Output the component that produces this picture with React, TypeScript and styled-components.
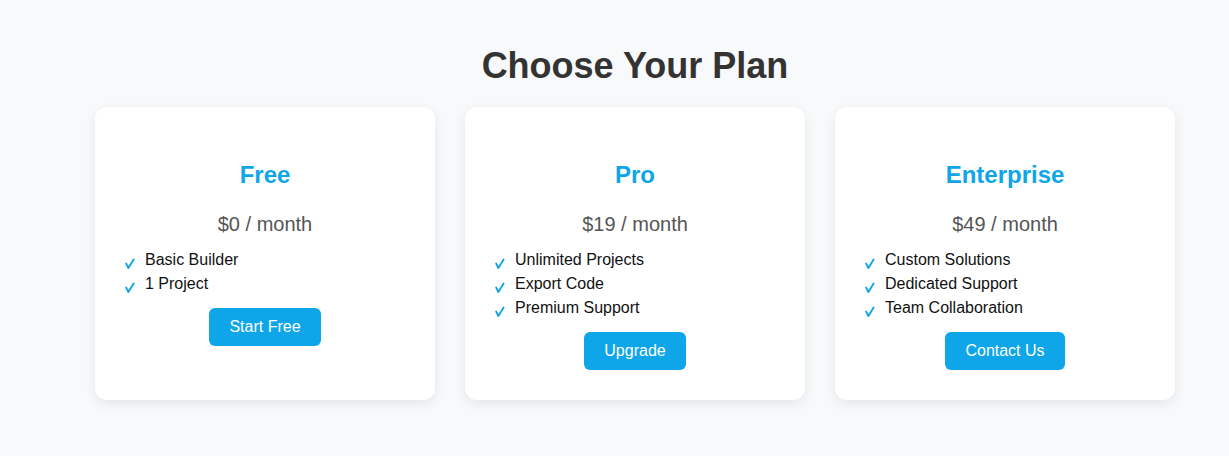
import React from "react"
import styled, { createGlobalStyle } from "styled-components"

const GlobalStyle = createGlobalStyle`
  html, body {
    margin: 0;
    background: #f8f9fa;
    font-family: "Liberation Sans", Arial, sans-serif;
  }
`

const accent = "#0ea5e9"

const Page = styled.div`
  min-height: 456px;
  box-sizing: border-box;
  padding: 45px 0 0 41px;
`

const Heading = styled.h1`
  margin: 0 0 20px;
  text-align: center;
  font-size: 36px;
  font-weight: 700;
  color: #333;
`

const Plans = styled.div`
  display: flex;
  justify-content: center;
  gap: 30px;
`

const Card = styled.div`
  width: 340px;
  box-sizing: border-box;
  padding: 30px;
  background: #fff;
  border-radius: 12px;
  box-shadow: 0 4px 12px rgba(0, 0, 0, 0.08);
  text-align: center;
`

const PlanName = styled.h3`
  margin: 24px 0 24px;
  font-size: 24px;
  font-weight: 700;
  color: ${accent};
`

const Price = styled.p`
  margin: 0 0 12px;
  font-size: 20px;
  color: #555;
`

const Features = styled.ul`
  list-style: none;
  margin: 0 0 12px;
  padding: 0;
  text-align: left;
`

const Feature = styled.li`
  display: flex;
  align-items: flex-start;
  font-size: 16px;
  line-height: 24px;
  color: #111;
`

const Check = styled.svg`
  flex: none;
  width: 12px;
  height: 12px;
  margin: 10px 8px 0 0;
`

const Action = styled.button`
  border: none;
  border-radius: 6px;
  padding: 10px 20px;
  background: ${accent};
  color: #fff;
  font-family: inherit;
  font-size: 16px;
  cursor: pointer;
`

type Plan = {
  name: string
  price: string
  features: string[]
  action: string
}

const plans: Plan[] = [
  { name: "Free", price: "$0 / month", features: ["Basic Builder", "1 Project"], action: "Start Free" },
  {
    name: "Pro",
    price: "$19 / month",
    features: ["Unlimited Projects", "Export Code", "Premium Support"],
    action: "Upgrade",
  },
  {
    name: "Enterprise",
    price: "$49 / month",
    features: ["Custom Solutions", "Dedicated Support", "Team Collaboration"],
    action: "Contact Us",
  },
]

const CheckIcon = () => (
  <Check viewBox="0 0 12 12">
    <path
      d="M1.2 5.6 L3.4 10 L8.6 1.6"
      fill="none"
      stroke={accent}
      strokeWidth="1.9"
      strokeLinecap="round"
      strokeLinejoin="round"
    />
  </Check>
)

const App = () => (
  <Page>
    <GlobalStyle />
    <Heading>Choose Your Plan</Heading>
    <Plans>
      {plans.map(plan => (
        <Card key={plan.name}>
          <PlanName>{plan.name}</PlanName>
          <Price>{plan.price}</Price>
          <Features>
            {plan.features.map(f => (
              <Feature key={f}>
                <CheckIcon />
                {f}
              </Feature>
            ))}
          </Features>
          <Action>{plan.action}</Action>
        </Card>
      ))}
    </Plans>
  </Page>
)

export default App
